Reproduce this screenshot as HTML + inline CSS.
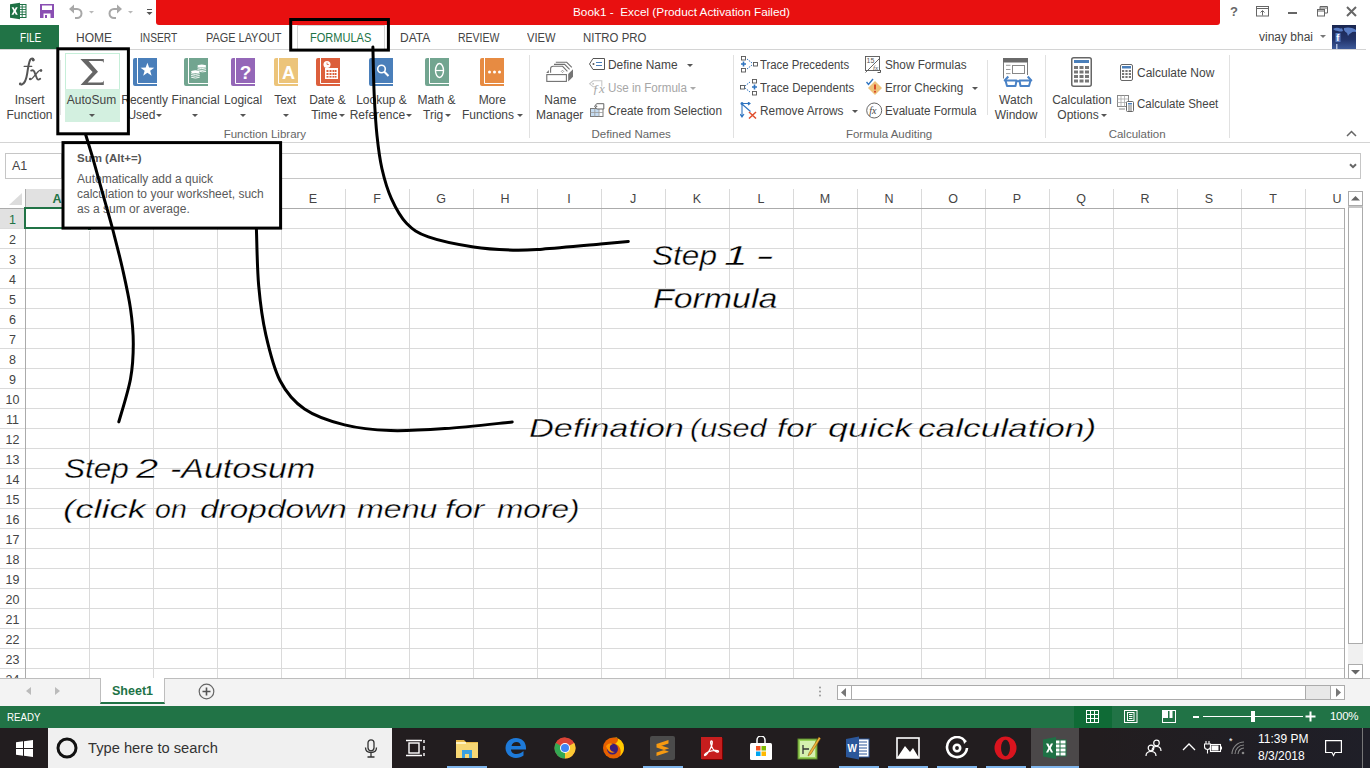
<!DOCTYPE html>
<html><head><meta charset="utf-8">
<style>
*{box-sizing:border-box;margin:0;padding:0}
html,body{width:1370px;height:768px;overflow:hidden;background:#fff;font-family:"Liberation Sans",sans-serif;color:#444}
.a{position:absolute}
.t{position:absolute;white-space:pre;line-height:1}
#title{left:0;top:0;width:1370px;height:25px;background:#fff}
#red{left:156px;top:0;width:1064px;height:25px;background:#e81010;border-radius:0 0 3px 3px}
.tab{position:absolute;top:32px;font-size:12px;color:#444;white-space:pre;line-height:13px;transform-origin:0 0}
.rl{position:absolute;font-size:11.6px;color:#444;white-space:pre;line-height:13px}
.gl{position:absolute;font-size:11.3px;color:#666;white-space:pre;line-height:13px;top:128px}
.sep{position:absolute;width:1px;background:#e1e1e1;top:55px;height:84px}
.car{position:absolute;width:0;height:0;border-left:3px solid transparent;border-right:3px solid transparent;border-top:3px solid #555}
.book{position:absolute;top:58px;width:24px;height:28px}
.ch{position:absolute;top:191px;font-size:12.5px;color:#444;line-height:14px;text-align:center;width:64px}
.rh{position:absolute;left:0;width:25px;font-size:12.5px;color:#444;line-height:14px;text-align:center}
.hw{position:absolute;white-space:pre;line-height:1;font-family:"Liberation Sans",sans-serif;font-style:italic;color:#000;font-size:25px;-webkit-text-stroke:0.35px #fff}
.rc{transform:translateX(-50%)}
</style></head><body>
<!-- title bar -->
<div class="a" id="red"></div>
<div class="t" style="left:573px;top:7px;font-size:11.8px;color:#fff">Book1 -  Excel (Product Activation Failed)</div>

<!-- tab row -->
<div class="a" style="left:0;top:25px;width:59px;height:25px;background:#217346"></div>
<div class="tab" style="left:19.5px;color:#fff;transform:scaleX(0.84)">FILE</div>
<div class="tab" style="left:76px">HOME</div>
<div class="tab" style="left:140px;transform:scaleX(0.85)">INSERT</div>
<div class="tab" style="left:206px;transform:scaleX(0.91)">PAGE LAYOUT</div>
<div class="a" style="left:297px;top:25px;width:88px;height:25px;border:1px solid #d4d4d4;border-bottom:none;background:#fff"></div>
<div class="tab" style="left:310px;color:#217346;transform:scaleX(0.92)">FORMULAS</div>
<div class="tab" style="left:400px">DATA</div>
<div class="tab" style="left:458px;transform:scaleX(0.875)">REVIEW</div>
<div class="tab" style="left:527px;transform:scaleX(0.93)">VIEW</div>
<div class="tab" style="left:583px;transform:scaleX(0.95)">NITRO PRO</div>
<div class="a" style="left:0;top:49px;width:1366px;height:1px;background:#d4d4d4"></div>
<div class="t" style="left:1259px;top:31px;font-size:12px;color:#444">vinay bhai</div>

<!-- ribbon -->
<div id="ribbon">
<!-- QAT -->
<svg class="a" style="left:9px;top:2px" width="19" height="18" viewBox="0 0 19 18"><rect x="9.5" y="2.5" width="7.5" height="13" fill="#fff" stroke="#1e7145" stroke-width="1"/><path d="M9.5 5h7.5M9.5 7.5h7.5M9.5 10h7.5M9.5 12.5h7.5M13.2 2.5v13" stroke="#1e7145" stroke-width="0.9"/><path d="M1 2.2 L11 0.8 L11 17.2 L1 15.8 Z" fill="#1e7145"/><path d="M2.6 5.2 L4.6 5.2 L5.7 7.5 L6.8 5.2 L8.7 5.2 L6.8 9 L8.8 12.8 L6.8 12.8 L5.7 10.5 L4.5 12.8 L2.5 12.8 L4.6 9 Z" fill="#fff"/></svg>
<svg class="a" style="left:40px;top:4px" width="14" height="14" viewBox="0 0 14 14"><path d="M0 0H14V14H0Z M2 1.5V6H12V1.5Z M3.5 9.5V14H10.5V9.5Z" fill="#8a4fb3" fill-rule="evenodd"/><rect x="5" y="11" width="2" height="3" fill="#8a4fb3"/></svg>
<svg class="a" style="left:68px;top:3px" width="28" height="16" viewBox="0 0 28 16"><path d="M3 6 H9 A4.5 4.5 0 0 1 9 15 H7" fill="none" stroke="#a8a8a8" stroke-width="2"/><path d="M1 6 L6 1.5 L6 10.5 Z" fill="#a8a8a8"/><path d="M21 8 h5 l-2.5 2.5z" fill="#b8b8b8"/></svg>
<svg class="a" style="left:108px;top:3px" width="28" height="16" viewBox="0 0 28 16"><path d="M12 6 H6 A4.5 4.5 0 0 0 6 15 H8" fill="none" stroke="#a8a8a8" stroke-width="2"/><path d="M14 6 L9 1.5 L9 10.5 Z" fill="#a8a8a8"/><path d="M20 8 h5 l-2.5 2.5z" fill="#b8b8b8"/></svg>
<svg class="a" style="left:146px;top:8px" width="8" height="8" viewBox="0 0 8 8"><rect x="1" y="1" width="5" height="1" fill="#555"/><path d="M0.5 4 h6 l-3 3z" fill="#555"/></svg>
<!-- window controls -->
<div class="t" style="left:1230px;top:5px;font-size:13px;font-weight:bold;color:#666">?</div>
<svg class="a" style="left:1256px;top:6px" width="14" height="11" viewBox="0 0 14 11"><rect x="0.5" y="0.5" width="12" height="9.5" fill="none" stroke="#666"/><path d="M0.5 2.5h12" stroke="#666"/><path d="M6.5 9.5V5M4.5 6.5l2-2 2 2" fill="none" stroke="#666"/></svg>
<div class="a" style="left:1288px;top:12px;width:9px;height:2px;background:#666"></div>
<svg class="a" style="left:1317px;top:6px" width="11" height="11" viewBox="0 0 11 11"><rect x="0.5" y="3.5" width="7" height="6.5" fill="none" stroke="#666"/><path d="M0.5 5h7" stroke="#666"/><path d="M3 3.5V0.5H10.5V7H7.5M3 2h7.5" fill="none" stroke="#666"/></svg>
<svg class="a" style="left:1346px;top:6px" width="11" height="11" viewBox="0 0 11 11"><path d="M1 1L10 10M10 1L1 10" stroke="#666" stroke-width="2"/></svg>
<!-- account -->
<svg class="a" style="left:1320px;top:35px" width="7" height="5" viewBox="0 0 7 5"><path d="M0 0h6l-3 3z" fill="#777"/></svg>
<svg class="a" style="left:1332px;top:25px" width="24" height="24" viewBox="0 0 24 24"><defs><linearGradient id="pg" x1="0" y1="0" x2="0" y2="1"><stop offset="0" stop-color="#1a2650"/><stop offset="0.6" stop-color="#22346a"/><stop offset="1" stop-color="#3d5a9a"/></linearGradient></defs><rect width="24" height="24" fill="url(#pg)"/><g fill="#5f85d0" opacity="0.9"><path d="M1 4 q3-2 6-1 q2 1 3 0 l1 3 q-3 1-5 0 q-3 0-5-2z"/><path d="M12 3 q4-1 8 0 q3 1 4 2 v2 q-3-1-5 1 q-2 1-3 3 l-1-3 q-2-1-3-3z"/></g><rect x="3.5" y="8" width="5" height="9" fill="#5a7cc0"/><text x="4.2" y="16" font-size="9" fill="#fff" font-family="Liberation Sans" font-weight="bold">f</text><rect x="4" y="19" width="1.5" height="5" fill="#cfdcf5" opacity="0.8"/></svg>

<!-- Insert function -->
<svg class="a" style="left:14px;top:54px" width="35" height="36" viewBox="14 54 35 36"><g fill="none" stroke="#555" stroke-linecap="round"><path d="M33.6 59.8 C33.4 58 31.2 57.9 30.2 59.8 C29 62 28 68 27.2 73.5 C26.3 79.5 25.2 83.5 21.8 84.6" stroke-width="2"/><path d="M24.1 66.4 H31.8" stroke-width="1.1"/><path d="M31.2 70.6 Q33.2 69.6 34.2 71.4 L37 78.5 Q37.8 80.6 40.2 78.8" stroke-width="1.9"/><path d="M41.3 70.2 Q39.8 69.8 38 71.8 L32.5 78.2 Q31.3 79.6 30 79.2" stroke-width="1.3"/></g><g fill="#555"><circle cx="33.2" cy="60.1" r="1.4"/><circle cx="20.3" cy="84" r="1.4"/><circle cx="41" cy="70.6" r="1.3"/><circle cx="30.2" cy="79" r="1.3"/></g></svg>
<!-- AutoSum highlight -->
<div class="a" style="left:65px;top:53px;width:55px;height:36px;border:1px solid #c6efd9;border-bottom:none;background:#fff"></div>
<div class="a" style="left:65px;top:89px;width:55px;height:33px;background:#d3f0e0"></div>
<svg class="a" style="left:79px;top:58px" width="27" height="28" viewBox="0 0 27 28"><path d="M1.4 0.9 L24.8 0.9 L24.8 5.1 L23.8 3.3 L21.5 3.0 L9.6 3.0 L19.0 13.8 L8.7 24.5 L21.5 24.5 L23.8 24.2 L24.8 22.5 L24.8 26.9 L1.6 26.9 L13.6 14.0Z" fill="#666"/></svg>
<div class="sep" style="left:60px;top:60px;height:55px"></div>
</div><!--/ribbon-->
<!-- r2 --><div class="t rc" style="left:29.7px;top:94px;font-size:12px;color:#444">Insert</div>
<div class="t rc" style="left:29.5px;top:109px;font-size:12px;color:#444">Function</div>
<div class="t rc" style="left:91.5px;top:94px;font-size:12px;color:#444">AutoSum</div>
<svg class="a" style="left:89px;top:114px" width="6" height="4"><path d="M0 0h6l-3 3z" fill="#555"/></svg>
<div class="t rc" style="left:144.6px;top:94px;font-size:12px;color:#444">Recently</div>
<div class="t rc" style="left:141.4px;top:109px;font-size:12px;color:#444">Used</div>
<svg class="a" style="left:156.4px;top:114px" width="6" height="4"><path d="M0 0h6l-3 3z" fill="#555"/></svg>
<div class="t rc" style="left:195.6px;top:94px;font-size:12px;color:#444">Financial</div>
<svg class="a" style="left:192.2px;top:114px" width="6" height="4"><path d="M0 0h6l-3 3z" fill="#555"/></svg>
<div class="t rc" style="left:243.1px;top:94px;font-size:12px;color:#444">Logical</div>
<svg class="a" style="left:240.3px;top:114px" width="6" height="4"><path d="M0 0h6l-3 3z" fill="#555"/></svg>
<div class="t rc" style="left:285.2px;top:94px;font-size:12px;color:#444">Text</div>
<svg class="a" style="left:282.6px;top:114px" width="6" height="4"><path d="M0 0h6l-3 3z" fill="#555"/></svg>
<div class="t rc" style="left:327.5px;top:94px;font-size:12px;color:#444">Date &amp;</div>
<div class="t rc" style="left:324.3px;top:109px;font-size:12px;color:#444">Time</div>
<svg class="a" style="left:339.4px;top:114px" width="6" height="4"><path d="M0 0h6l-3 3z" fill="#555"/></svg>
<div class="t rc" style="left:381.5px;top:94px;font-size:12px;color:#444">Lookup &amp;</div>
<div class="t rc" style="left:377.4px;top:109px;font-size:12px;color:#444">Reference</div>
<svg class="a" style="left:405.6px;top:114px" width="6" height="4"><path d="M0 0h6l-3 3z" fill="#555"/></svg>
<div class="t rc" style="left:436.6px;top:94px;font-size:12px;color:#444">Math &amp;</div>
<div class="t rc" style="left:433.2px;top:109px;font-size:12px;color:#444">Trig</div>
<svg class="a" style="left:445.4px;top:114px" width="6" height="4"><path d="M0 0h6l-3 3z" fill="#555"/></svg>
<div class="t rc" style="left:492.3px;top:94px;font-size:12px;color:#444">More</div>
<div class="t rc" style="left:488px;top:109px;font-size:12px;color:#444">Functions</div>
<svg class="a" style="left:516.6px;top:114px" width="6" height="4"><path d="M0 0h6l-3 3z" fill="#555"/></svg>
<div class="t rc" style="left:264.9px;top:129px;font-size:11.5px;color:#666">Function Library</div>
<svg class="a" style="left:133px;top:58px" width="24" height="28" viewBox="0 0 24 28"><path d="M0 2 Q0 0 2 0 H4 V25 Q4 26 5 26 H24 V28 H2 Q0 28 0 26 Z" fill="#4a7fba"/><rect x="5" y="0" width="19" height="25" fill="#4a7fba"/><path d="M14.40 4.70 L16.10 9.55 L21.25 9.68 L17.16 12.80 L18.63 17.72 L14.40 14.80 L10.17 17.72 L11.64 12.80 L7.55 9.68 L12.70 9.55Z" fill="#fff"/></svg>
<svg class="a" style="left:184px;top:58px" width="24" height="28" viewBox="0 0 24 28"><path d="M0 2 Q0 0 2 0 H4 V25 Q4 26 5 26 H24 V28 H2 Q0 28 0 26 Z" fill="#72a590"/><rect x="5" y="0" width="19" height="25" fill="#72a590"/><g fill="#fff"><ellipse cx="17.8" cy="8" rx="4.3" ry="1.5"/><ellipse cx="11.4" cy="13.8" rx="4.3" ry="1.5"/></g><g fill="none" stroke="#fff" stroke-width="0.9"><path d="M13.5 9.8 Q17.8 11.6 22.1 9.8 M13.5 11.6 Q17.8 13.4 22.1 11.6 M15.8 13.4 Q17.8 14.3 22.1 13.4"/><path d="M7.1 15.6 Q11.4 17.4 15.7 15.6 M7.1 17.4 Q11.4 19.2 15.7 17.4 M7.1 19.2 Q11.4 21 15.7 19.2"/></g></svg>
<svg class="a" style="left:231px;top:58px" width="24" height="28" viewBox="0 0 24 28"><path d="M0 2 Q0 0 2 0 H4 V25 Q4 26 5 26 H24 V28 H2 Q0 28 0 26 Z" fill="#9467b8"/><rect x="5" y="0" width="19" height="25" fill="#9467b8"/><text x="14.5" y="21" font-family="Liberation Sans" font-weight="bold" font-size="19" fill="#fff" text-anchor="middle">?</text></svg>
<svg class="a" style="left:274px;top:58px" width="24" height="28" viewBox="0 0 24 28"><path d="M0 2 Q0 0 2 0 H4 V25 Q4 26 5 26 H24 V28 H2 Q0 28 0 26 Z" fill="#ecc47a"/><rect x="5" y="0" width="19" height="25" fill="#ecc47a"/><text x="14.5" y="21" font-family="Liberation Sans" font-weight="bold" font-size="18" fill="#fff" text-anchor="middle">A</text></svg>
<svg class="a" style="left:316px;top:58px" width="24" height="28" viewBox="0 0 24 28"><path d="M0 2 Q0 0 2 0 H4 V25 Q4 26 5 26 H24 V28 H2 Q0 28 0 26 Z" fill="#dc5f3c"/><rect x="5" y="0" width="19" height="25" fill="#dc5f3c"/><circle cx="11" cy="6.5" r="3.5" fill="#fff"/><path d="M11 4.5v2h1.8" stroke="#dc5f3c" stroke-width="0.8" fill="none"/><rect x="9" y="10" width="13" height="11" fill="#fff"/><g fill="#dc5f3c"><rect x="10.5" y="12" width="2" height="2"/><rect x="13.5" y="12" width="2" height="2"/><rect x="16.5" y="12" width="2" height="2"/><rect x="19" y="12" width="1.5" height="2"/><rect x="10.5" y="15" width="2" height="2"/><rect x="13.5" y="15" width="2" height="2"/><rect x="16.5" y="15" width="2" height="2"/><rect x="19" y="15" width="1.5" height="2"/><rect x="10.5" y="18" width="2" height="1.6"/><rect x="13.5" y="18" width="2" height="1.6"/><rect x="16.5" y="18" width="2" height="1.6"/><rect x="19" y="18" width="1.5" height="1.6"/></g></svg>
<svg class="a" style="left:369px;top:58px" width="24" height="28" viewBox="0 0 24 28"><path d="M0 2 Q0 0 2 0 H4 V25 Q4 26 5 26 H24 V28 H2 Q0 28 0 26 Z" fill="#4a7fba"/><rect x="5" y="0" width="19" height="25" fill="#4a7fba"/><circle cx="12.5" cy="11" r="3.8" fill="none" stroke="#fff" stroke-width="1.6"/><path d="M15.3 13.8 L19.5 18" stroke="#fff" stroke-width="2"/></svg>
<svg class="a" style="left:425px;top:58px" width="24" height="28" viewBox="0 0 24 28"><path d="M0 2 Q0 0 2 0 H4 V25 Q4 26 5 26 H24 V28 H2 Q0 28 0 26 Z" fill="#72a590"/><rect x="5" y="0" width="19" height="25" fill="#72a590"/><ellipse cx="14.5" cy="12.5" rx="4" ry="7" fill="none" stroke="#fff" stroke-width="1.4"/><path d="M10.5 12.5h8" stroke="#fff" stroke-width="1.2"/></svg>
<svg class="a" style="left:480px;top:58px" width="24" height="28" viewBox="0 0 24 28"><path d="M0 2 Q0 0 2 0 H4 V25 Q4 26 5 26 H24 V28 H2 Q0 28 0 26 Z" fill="#e78b42"/><rect x="5" y="0" width="19" height="25" fill="#e78b42"/><circle cx="9.5" cy="14" r="1.5" fill="#fff"/><circle cx="14.5" cy="14" r="1.5" fill="#fff"/><circle cx="19.5" cy="14" r="1.5" fill="#fff"/></svg>
<div class="sep" style="left:529px;top:55px;height:83px"></div>
<svg class="a" style="left:540px;top:56px" width="40" height="32" viewBox="540 56 40 32"><g fill="none" stroke="#707070" stroke-width="1.1"><rect x="546.8" y="74.6" width="19.6" height="6.8"/><path d="M550.6 72.8 V68.8 Q550.6 66.3 553.2 66.3 H562.6 L567.4 71.3"/><path d="M554 64.4 H564.6 L569.6 69.4"/><path d="M555.8 62.3 H566.7 L571.8 67.4"/></g><path d="M568.2 74 L573 69.3 V76.8 L568.2 81.4Z" fill="#757575"/><path d="M546.2 72.9 L548.8 70 V72.9Z" fill="#707070"/><path d="M562.5 70.2 L563.7 71.4 L562.5 72.6 L561.3 71.4Z" fill="none" stroke="#888" stroke-width="0.8"/></svg>
<div class="t rc" style="left:560.3px;top:94px;font-size:12px;color:#444">Name</div>
<div class="t rc" style="left:559.7px;top:109px;font-size:12px;color:#444">Manager</div>
<svg class="a" style="left:589px;top:58px" width="16" height="12" viewBox="0 0 16 12"><path d="M4 0.5 H15.5 V11.5 H4 L0.5 6 Z" fill="none" stroke="#555"/><circle cx="4.5" cy="6" r="1" fill="#555"/><path d="M7 4.5h6M7 7.5h6" stroke="#4a7fba" stroke-width="1.2"/></svg>
<div class="t" style="left:607.5px;top:59px;font-size:12px;color:#444;transform:scaleX(0.993);transform-origin:0 0">Define Name</div>
<svg class="a" style="left:686.5px;top:64px" width="6" height="4"><path d="M0 0h6l-3 3z" fill="#555"/></svg>
<svg class="a" style="left:586px;top:78px" width="22" height="18" viewBox="586 78 22 18"><path d="M601.8 86.5 V80.8 H593.2 L589.6 83.8 L593.2 86.8 H596" fill="none" stroke="#c8c8c8" stroke-width="1.1"/><circle cx="593.1" cy="83.8" r="0.9" fill="#bbb"/><text x="592.5" y="92.5" font-family="Liberation Serif" font-style="italic" font-size="13" fill="#a8a8a8">&#x192;x</text></svg>
<div class="t" style="left:607.5px;top:82px;font-size:12px;color:#a6a6a6;transform:scaleX(0.970);transform-origin:0 0">Use in Formula</div>
<svg class="a" style="left:689.9px;top:87px" width="6" height="4"><path d="M0 0h6l-3 3z" fill="#aaa"/></svg>
<svg class="a" style="left:586px;top:100px" width="22" height="20" viewBox="586 100 22 20"><rect x="590.5" y="108.5" width="12.5" height="8" fill="#fff" stroke="#7a7a7a" stroke-width="1"/><rect x="591" y="109" width="8.3" height="7" fill="#c5dcf2"/><path d="M594.8 108.5 V116.5 M599 108.5 V116.5 M590.5 112.5 H603" stroke="#9a9a9a" stroke-width="0.8"/><path d="M596.6 103.7 H603.8 V109 H596.6 L594.6 106.4Z" fill="#fff" stroke="#666" stroke-width="1"/><path d="M596.4 105.4 v2 M595.4 106.4 h2" stroke="#666" stroke-width="0.7"/></svg>
<div class="t" style="left:607.5px;top:105px;font-size:12px;color:#444;transform:scaleX(0.982);transform-origin:0 0">Create from Selection</div>
<div class="t rc" style="left:631.2px;top:129px;font-size:11.5px;color:#666">Defined Names</div>
<div class="sep" style="left:733px;top:55px;height:83px"></div>
<svg class="a" style="left:740px;top:56px" width="18" height="17" viewBox="0 0 18 17"><g fill="none" stroke="#555" stroke-width="0.9"><rect x="1.5" y="0.5" width="4" height="3.5"/><rect x="1.5" y="12.5" width="4" height="3.5"/><rect x="13.5" y="6.5" width="4" height="3.5"/></g><path d="M3.5 5.5v5M1 8h5" stroke="#2f74c0" stroke-width="1.6"/><path d="M7 3 l5 4 M7 13 l5-4" stroke="#2f74c0" stroke-width="1" stroke-dasharray="1.5 1"/></svg>
<div class="t" style="left:759.5px;top:59px;font-size:12px;color:#444;transform:scaleX(0.945);transform-origin:0 0">Trace Precedents</div>
<svg class="a" style="left:740px;top:79px" width="18" height="17" viewBox="0 0 18 17"><g fill="none" stroke="#555" stroke-width="0.9"><rect x="0.5" y="6.5" width="4" height="3.5"/><rect x="12.5" y="0.5" width="4" height="3.5"/><rect x="12.5" y="12.5" width="4" height="3.5"/></g><path d="M14.5 5.5v5M12 8h5" stroke="#2f74c0" stroke-width="1.6"/><path d="M5 7 l5-4 M5 9 l5 4" stroke="#2f74c0" stroke-width="1" stroke-dasharray="1.5 1"/></svg>
<div class="t" style="left:759.5px;top:82px;font-size:12px;color:#444;transform:scaleX(0.959);transform-origin:0 0">Trace Dependents</div>
<svg class="a" style="left:740px;top:102px" width="18" height="17" viewBox="0 0 18 17"><circle cx="2" cy="1.5" r="1.5" fill="#2f74c0"/><path d="M2 2v12M0 12l2 3 2-3M2 1.5h8M8 0l2 1.5-2 1.5M2.5 2.5l8 7" stroke="#2f74c0" stroke-width="1.1" fill="none"/><path d="M9 10l7 6.5M16 10l-7 6.5" stroke="#e0502f" stroke-width="1.5"/></svg>
<div class="t" style="left:759.5px;top:105px;font-size:12px;color:#444;transform:scaleX(0.986);transform-origin:0 0">Remove Arrows</div>
<svg class="a" style="left:852.2px;top:110px" width="6" height="4"><path d="M0 0h6l-3 3z" fill="#555"/></svg>
<svg class="a" style="left:865px;top:56px" width="17" height="17" viewBox="0 0 17 17"><rect x="0.5" y="0.5" width="14" height="14" fill="none" stroke="#555" stroke-width="0.9"/><path d="M0.5 16.5 L15 2" stroke="#555" stroke-width="0.9"/><text x="1.5" y="7" font-size="7" fill="#555" font-family="Liberation Sans">15</text><text x="8" y="14" font-size="7" font-style="italic" fill="#555" font-family="Liberation Serif">fx</text><path d="M15.5 14v2.5h-3" stroke="#555" fill="none"/></svg>
<div class="t" style="left:884.5px;top:59px;font-size:12px;color:#444;transform:scaleX(0.979);transform-origin:0 0">Show Formulas</div>
<svg class="a" style="left:866px;top:78px" width="17" height="17" viewBox="0 0 17 17"><path d="M9 3 L16 10 L9 17 L2 10 Z" fill="#eec27a"/><path d="M9 6.5v5" stroke="#d43f1f" stroke-width="1.8"/><circle cx="9" cy="13.8" r="1" fill="#d43f1f"/><path d="M0.5 4 l2 2.5 l4.5-5.5" stroke="#2f74c0" stroke-width="1.4" fill="none"/></svg>
<div class="t" style="left:884.5px;top:82px;font-size:12px;color:#444;transform:scaleX(0.977);transform-origin:0 0">Error Checking</div>
<svg class="a" style="left:972.4px;top:87px" width="6" height="4"><path d="M0 0h6l-3 3z" fill="#555"/></svg>
<svg class="a" style="left:866px;top:102px" width="17" height="17" viewBox="0 0 17 17"><circle cx="8.2" cy="8.5" r="7.5" fill="none" stroke="#555" stroke-width="0.9"/><text x="3.2" y="12" font-size="10" font-style="italic" fill="#444" font-family="Liberation Serif">fx</text></svg>
<div class="t" style="left:884.5px;top:105px;font-size:12px;color:#444;transform:scaleX(0.973);transform-origin:0 0">Evaluate Formula</div>
<div class="t rc" style="left:889.1px;top:129px;font-size:11.5px;color:#666">Formula Auditing</div>
<div class="sep" style="left:987px;top:60px;height:55px"></div>
<svg class="a" style="left:1000px;top:56px" width="35" height="33" viewBox="1000 56 35 33"><rect x="1003" y="58" width="25" height="4.5" fill="#6a6a6a"/><path d="M1003.5 62 V78.5 M1027.5 62 V75" stroke="#7a7a7a" stroke-width="1"/><path d="M1006 65.3h4.5M1006 69.5h4.5M1006 73.6h4.5" stroke="#9a9a9a" stroke-width="1"/><rect x="1012.5" y="65.5" width="12" height="8" fill="none" stroke="#888" stroke-width="1"/><g fill="none" stroke="#4a82c6" stroke-width="2" stroke-linejoin="round"><path d="M1005.5 80.5 H1016.5 L1015.5 86 H1007 Z"/><path d="M1019.5 80.5 H1030.5 L1029 86 H1020.5 Z"/><path d="M1016.5 81.2 H1019.5"/><path d="M1008.3 76.5 L1004.2 81 M1027.7 76.5 L1031.8 81"/></g></svg>
<div class="t rc" style="left:1015.9px;top:94px;font-size:12px;color:#444">Watch</div>
<div class="t rc" style="left:1016px;top:109px;font-size:12px;color:#444">Window</div>
<div class="sep" style="left:1045px;top:55px;height:83px"></div>
<svg class="a" style="left:1071px;top:57px" width="21" height="30" viewBox="0 0 21 30"><rect x="0.75" y="0.75" width="19.5" height="28.5" rx="2" fill="#fff" stroke="#666" stroke-width="1.5"/><rect x="3" y="3" width="15" height="3" fill="#4a7fba"/><g fill="#777"><rect x="3" y="9" width="4" height="3"/><rect x="8.5" y="9" width="4" height="3"/><rect x="14" y="9" width="4" height="3"/><rect x="3" y="13.5" width="4" height="3"/><rect x="8.5" y="13.5" width="4" height="3"/><rect x="14" y="13.5" width="4" height="3"/><rect x="3" y="18" width="4" height="3"/><rect x="8.5" y="18" width="4" height="3"/><rect x="14" y="18" width="4" height="3"/><rect x="3" y="22.5" width="4" height="3"/><rect x="8.5" y="22.5" width="4" height="3"/><rect x="14" y="22.5" width="4" height="3"/></g></svg>
<div class="t rc" style="left:1081.9px;top:94px;font-size:12px;color:#444">Calculation</div>
<div class="t rc" style="left:1078px;top:109px;font-size:12px;color:#444">Options</div>
<svg class="a" style="left:1101.3px;top:114px" width="6" height="4"><path d="M0 0h6l-3 3z" fill="#555"/></svg>
<svg class="a" style="left:1120px;top:64px" width="13" height="17" viewBox="0 0 13 17"><rect x="0.5" y="0.5" width="12" height="16" rx="1.5" fill="#fff" stroke="#666"/><rect x="2" y="2" width="9" height="2.5" fill="#4a7fba"/><g fill="#777"><rect x="2" y="6" width="2.2" height="2"/><rect x="5.4" y="6" width="2.2" height="2"/><rect x="8.8" y="6" width="2.2" height="2"/><rect x="2" y="9" width="2.2" height="2"/><rect x="5.4" y="9" width="2.2" height="2"/><rect x="8.8" y="9" width="2.2" height="2"/><rect x="2" y="12" width="2.2" height="2"/><rect x="5.4" y="12" width="2.2" height="2"/><rect x="8.8" y="12" width="2.2" height="2"/></g></svg>
<div class="t" style="left:1136.5px;top:67px;font-size:12px;color:#444;transform:scaleX(0.999);transform-origin:0 0">Calculate Now</div>
<svg class="a" style="left:1117px;top:95px" width="17" height="17" viewBox="0 0 17 17"><rect x="0.5" y="0.5" width="11" height="11" fill="#fff" stroke="#888"/><path d="M0.5 4h11M0.5 7.5h11M4 0.5v11M7.5 0.5v11" stroke="#aaa" stroke-width="0.8"/><path d="M2 14 h6" stroke="#888"/><rect x="9.5" y="6.5" width="7" height="10" rx="1" fill="#fff" stroke="#666"/><rect x="11" y="8" width="4" height="1.5" fill="#4a7fba"/><path d="M11 11h4M11 13h4M11 15h4" stroke="#777" stroke-width="1"/></svg>
<div class="t" style="left:1136.5px;top:98px;font-size:12px;color:#444;transform:scaleX(0.959);transform-origin:0 0">Calculate Sheet</div>
<div class="t rc" style="left:1137.1px;top:129px;font-size:11.5px;color:#666">Calculation</div>
<div class="sep" style="left:1229px;top:55px;height:83px"></div>
<svg class="a" style="left:1346px;top:130px" width="11" height="7" viewBox="0 0 11 7"><path d="M1 6 L5.5 1.5 L10 6" stroke="#666" stroke-width="1.5" fill="none"/></svg><!--/r2-->
<!-- ribbon bottom -->
<div class="a" style="left:0;top:142px;width:1370px;height:1px;background:#d4d4d4"></div>

<!-- formula bar -->
<div class="a" style="left:5px;top:153px;width:57px;height:26px;border:1px solid #c6c6c6;background:#fff"></div>
<div class="t" style="left:12px;top:160px;font-size:12.5px;color:#444">A1</div>
<div class="a" style="left:5px;top:153px;width:1356px;height:26px;border:1px solid #c6c6c6"></div>

<!-- grid -->
<div class="a" id="grid" style="left:0;top:188px;width:1345px;height:490px;overflow:hidden"><div class="a" style="left:25px;top:1px;width:64px;height:20px;background:#e1e1e1"></div>
<div class="a" style="left:0;top:20px;width:25px;height:20px;background:#e1e1e1"></div>
<div class="ch" style="left:25px;top:4px;color:#217346;font-weight:bold">A</div>
<div class="ch" style="left:89px;top:4px;color:#444;font-weight:normal">B</div>
<div class="ch" style="left:153px;top:4px;color:#444;font-weight:normal">C</div>
<div class="ch" style="left:217px;top:4px;color:#444;font-weight:normal">D</div>
<div class="ch" style="left:281px;top:4px;color:#444;font-weight:normal">E</div>
<div class="ch" style="left:345px;top:4px;color:#444;font-weight:normal">F</div>
<div class="ch" style="left:409px;top:4px;color:#444;font-weight:normal">G</div>
<div class="ch" style="left:473px;top:4px;color:#444;font-weight:normal">H</div>
<div class="ch" style="left:537px;top:4px;color:#444;font-weight:normal">I</div>
<div class="ch" style="left:601px;top:4px;color:#444;font-weight:normal">J</div>
<div class="ch" style="left:665px;top:4px;color:#444;font-weight:normal">K</div>
<div class="ch" style="left:729px;top:4px;color:#444;font-weight:normal">L</div>
<div class="ch" style="left:793px;top:4px;color:#444;font-weight:normal">M</div>
<div class="ch" style="left:857px;top:4px;color:#444;font-weight:normal">N</div>
<div class="ch" style="left:921px;top:4px;color:#444;font-weight:normal">O</div>
<div class="ch" style="left:985px;top:4px;color:#444;font-weight:normal">P</div>
<div class="ch" style="left:1049px;top:4px;color:#444;font-weight:normal">Q</div>
<div class="ch" style="left:1113px;top:4px;color:#444;font-weight:normal">R</div>
<div class="ch" style="left:1177px;top:4px;color:#444;font-weight:normal">S</div>
<div class="ch" style="left:1241px;top:4px;color:#444;font-weight:normal">T</div>
<div class="ch" style="left:1305px;top:4px;color:#444;font-weight:normal">U</div>
<div class="a" style="left:89px;top:1px;width:1px;height:490px;background:#dadada"></div>
<div class="a" style="left:153px;top:1px;width:1px;height:490px;background:#dadada"></div>
<div class="a" style="left:217px;top:1px;width:1px;height:490px;background:#dadada"></div>
<div class="a" style="left:281px;top:1px;width:1px;height:490px;background:#dadada"></div>
<div class="a" style="left:345px;top:1px;width:1px;height:490px;background:#dadada"></div>
<div class="a" style="left:409px;top:1px;width:1px;height:490px;background:#dadada"></div>
<div class="a" style="left:473px;top:1px;width:1px;height:490px;background:#dadada"></div>
<div class="a" style="left:537px;top:1px;width:1px;height:490px;background:#dadada"></div>
<div class="a" style="left:601px;top:1px;width:1px;height:490px;background:#dadada"></div>
<div class="a" style="left:665px;top:1px;width:1px;height:490px;background:#dadada"></div>
<div class="a" style="left:729px;top:1px;width:1px;height:490px;background:#dadada"></div>
<div class="a" style="left:793px;top:1px;width:1px;height:490px;background:#dadada"></div>
<div class="a" style="left:857px;top:1px;width:1px;height:490px;background:#dadada"></div>
<div class="a" style="left:921px;top:1px;width:1px;height:490px;background:#dadada"></div>
<div class="a" style="left:985px;top:1px;width:1px;height:490px;background:#dadada"></div>
<div class="a" style="left:1049px;top:1px;width:1px;height:490px;background:#dadada"></div>
<div class="a" style="left:1113px;top:1px;width:1px;height:490px;background:#dadada"></div>
<div class="a" style="left:1177px;top:1px;width:1px;height:490px;background:#dadada"></div>
<div class="a" style="left:1241px;top:1px;width:1px;height:490px;background:#dadada"></div>
<div class="a" style="left:1305px;top:1px;width:1px;height:490px;background:#dadada"></div>
<div class="a" style="left:0;top:40px;width:1345px;height:1px;background:#dadada"></div>
<div class="a" style="left:0;top:60px;width:1345px;height:1px;background:#dadada"></div>
<div class="a" style="left:0;top:80px;width:1345px;height:1px;background:#dadada"></div>
<div class="a" style="left:0;top:100px;width:1345px;height:1px;background:#dadada"></div>
<div class="a" style="left:0;top:120px;width:1345px;height:1px;background:#dadada"></div>
<div class="a" style="left:0;top:140px;width:1345px;height:1px;background:#dadada"></div>
<div class="a" style="left:0;top:160px;width:1345px;height:1px;background:#dadada"></div>
<div class="a" style="left:0;top:180px;width:1345px;height:1px;background:#dadada"></div>
<div class="a" style="left:0;top:200px;width:1345px;height:1px;background:#dadada"></div>
<div class="a" style="left:0;top:220px;width:1345px;height:1px;background:#dadada"></div>
<div class="a" style="left:0;top:240px;width:1345px;height:1px;background:#dadada"></div>
<div class="a" style="left:0;top:260px;width:1345px;height:1px;background:#dadada"></div>
<div class="a" style="left:0;top:280px;width:1345px;height:1px;background:#dadada"></div>
<div class="a" style="left:0;top:300px;width:1345px;height:1px;background:#dadada"></div>
<div class="a" style="left:0;top:320px;width:1345px;height:1px;background:#dadada"></div>
<div class="a" style="left:0;top:340px;width:1345px;height:1px;background:#dadada"></div>
<div class="a" style="left:0;top:360px;width:1345px;height:1px;background:#dadada"></div>
<div class="a" style="left:0;top:380px;width:1345px;height:1px;background:#dadada"></div>
<div class="a" style="left:0;top:400px;width:1345px;height:1px;background:#dadada"></div>
<div class="a" style="left:0;top:420px;width:1345px;height:1px;background:#dadada"></div>
<div class="a" style="left:0;top:440px;width:1345px;height:1px;background:#dadada"></div>
<div class="a" style="left:0;top:460px;width:1345px;height:1px;background:#dadada"></div>
<div class="a" style="left:0;top:480px;width:1345px;height:1px;background:#dadada"></div>
<div class="a" style="left:0;top:500px;width:1345px;height:1px;background:#dadada"></div>
<div class="a" style="left:0;top:520px;width:1345px;height:1px;background:#dadada"></div>
<div class="rh" style="top:25px;color:#217346;font-weight:normal">1</div>
<div class="rh" style="top:45px;color:#444;font-weight:normal">2</div>
<div class="rh" style="top:65px;color:#444;font-weight:normal">3</div>
<div class="rh" style="top:85px;color:#444;font-weight:normal">4</div>
<div class="rh" style="top:105px;color:#444;font-weight:normal">5</div>
<div class="rh" style="top:125px;color:#444;font-weight:normal">6</div>
<div class="rh" style="top:145px;color:#444;font-weight:normal">7</div>
<div class="rh" style="top:165px;color:#444;font-weight:normal">8</div>
<div class="rh" style="top:185px;color:#444;font-weight:normal">9</div>
<div class="rh" style="top:205px;color:#444;font-weight:normal">10</div>
<div class="rh" style="top:225px;color:#444;font-weight:normal">11</div>
<div class="rh" style="top:245px;color:#444;font-weight:normal">12</div>
<div class="rh" style="top:265px;color:#444;font-weight:normal">13</div>
<div class="rh" style="top:285px;color:#444;font-weight:normal">14</div>
<div class="rh" style="top:305px;color:#444;font-weight:normal">15</div>
<div class="rh" style="top:325px;color:#444;font-weight:normal">16</div>
<div class="rh" style="top:345px;color:#444;font-weight:normal">17</div>
<div class="rh" style="top:365px;color:#444;font-weight:normal">18</div>
<div class="rh" style="top:385px;color:#444;font-weight:normal">19</div>
<div class="rh" style="top:405px;color:#444;font-weight:normal">20</div>
<div class="rh" style="top:425px;color:#444;font-weight:normal">21</div>
<div class="rh" style="top:445px;color:#444;font-weight:normal">22</div>
<div class="rh" style="top:465px;color:#444;font-weight:normal">23</div>
<div class="rh" style="top:485px;color:#444;font-weight:normal">24</div>
<div class="a" style="left:0;top:20px;width:1345px;height:1px;background:#ababab"></div>
<div class="a" style="left:25px;top:1px;width:1px;height:489px;background:#ababab"></div>
<div class="a" style="left:1344px;top:20px;width:1px;height:470px;background:#ababab"></div>
<div class="a" style="left:25px;top:19px;width:64px;height:2px;background:#217346"></div>
<div class="a" style="left:24px;top:20px;width:2px;height:20px;background:#217346"></div>
<svg class="a" style="left:8px;top:4px" width="15" height="14"><path d="M14 1 L14 13 L1 13 Z" fill="#dcdcdc"/></svg>
<div class="a" style="left:24px;top:19px;width:67px;height:22px;border:2px solid #217346"></div>
<div class="a" style="left:87px;top:38px;width:5px;height:5px;background:#217346;border:1px solid #fff"></div></div><!--/grid-->

<!-- sheet tabs -->
<div class="a" style="left:0;top:678px;width:1370px;height:28px;background:#f3f3f3;border-top:1px solid #bdbdbd"></div>
<div class="a" style="left:100px;top:678px;width:65px;height:26px;background:#fff;border-left:1px solid #bdbdbd;border-right:1px solid #bdbdbd;border-bottom:2px solid #217346"></div>
<div class="t" style="left:112px;top:685px;font-size:12.5px;font-weight:bold;color:#217346">Sheet1</div>

<!-- status bar -->
<div class="a" style="left:0;top:706px;width:1370px;height:22px;background:#217346"></div>
<div class="t" style="left:7px;top:712px;font-size:11px;color:#fff;transform:scaleX(0.88);transform-origin:0 0">READY</div>

<!-- bot --><div class="a" style="left:1345px;top:188px;width:25px;height:490px;background:#fff"></div>
<div class="a" style="left:1348px;top:191px;width:15px;height:488px;background:#f0f0f0"></div>
<div class="a" style="left:1348px;top:191px;width:15px;height:15px;border:1px solid #ababab;background:#fff"></div>
<svg class="a" style="left:1351px;top:196px" width="9" height="5"><path d="M0 4.5 L4.5 0 L9 4.5Z" fill="#666"/></svg>
<div class="a" style="left:1348px;top:206px;width:15px;height:438px;border:1px solid #ababab;border-top:2px solid #c6c6c6;background:#fff"></div>
<div class="a" style="left:1348px;top:664px;width:15px;height:15px;border:1px solid #ababab;background:#fff"></div>
<svg class="a" style="left:1351px;top:670px" width="9" height="5"><path d="M0 0 L4.5 4.5 L9 0Z" fill="#666"/></svg>
<svg class="a" style="left:1349px;top:163px" width="8" height="6"><path d="M1 1.2 L4 4.2 L7 1.2" stroke="#666" stroke-width="2" fill="none"/></svg>
<svg class="a" style="left:26px;top:687px" width="6" height="8"><path d="M5 0 L0 4 L5 8Z" fill="#bbb"/></svg>
<svg class="a" style="left:55px;top:687px" width="6" height="8"><path d="M0 0 L5 4 L0 8Z" fill="#bbb"/></svg>
<svg class="a" style="left:198px;top:683px" width="17" height="17"><circle cx="8.5" cy="8.5" r="7.3" fill="none" stroke="#666" stroke-width="1.2"/><path d="M8.5 4.5v8M4.5 8.5h8" stroke="#555" stroke-width="1.6"/></svg>
<svg class="a" style="left:818px;top:686px" width="4" height="12"><circle cx="2" cy="1.5" r="1" fill="#999"/><circle cx="2" cy="5.5" r="1" fill="#999"/><circle cx="2" cy="9.5" r="1" fill="#999"/></svg>
<div class="a" style="left:837px;top:685px;width:508px;height:15px;border:1px solid #ababab;background:#e8e8e8"></div>
<div class="a" style="left:851px;top:685px;width:455px;height:15px;border:1px solid #ababab;background:#fff"></div>
<div class="a" style="left:837px;top:685px;width:15px;height:15px;border:1px solid #ababab;background:#fff"></div>
<svg class="a" style="left:841px;top:688px" width="6" height="9"><path d="M5 0 L0 4.5 L5 9Z" fill="#777"/></svg>
<div class="a" style="left:1330px;top:685px;width:15px;height:15px;border:1px solid #ababab;background:#fff"></div>
<svg class="a" style="left:1336px;top:688px" width="6" height="9"><path d="M0 0 L5 4.5 L0 9Z" fill="#777"/></svg>
<div class="a" style="left:1074px;top:706px;width:38px;height:22px;background:#0f6b36"></div>
<svg class="a" style="left:1085px;top:709px" width="15" height="15" viewBox="0 0 15 15"><g stroke="#fff" stroke-width="1" fill="none"><rect x="1.5" y="1.5" width="12" height="12"/><path d="M5.5 1.5v12M9.5 1.5v12M1.5 5.5h12M1.5 9.5h12"/></g></svg>
<svg class="a" style="left:1123px;top:709px" width="16" height="15" viewBox="0 0 16 15"><g stroke="#fff" stroke-width="1" fill="none"><rect x="1.5" y="1.5" width="12.5" height="12"/><rect x="4.5" y="3.5" width="6.5" height="8"/><path d="M6 5.5h3.5M6 7.5h3.5M6 9.5h3.5"/></g></svg>
<svg class="a" style="left:1161px;top:709px" width="16" height="15" viewBox="0 0 16 15"><g stroke="#fff" stroke-width="1" fill="none"><rect x="1.5" y="1.5" width="13" height="12"/></g><rect x="2" y="2" width="5" height="7" fill="#fff"/><rect x="8.5" y="2" width="3" height="7" fill="#fff"/></svg>
<div class="a" style="left:1193px;top:716px;width:6px;height:2px;background:#fff"></div>
<div class="a" style="left:1203px;top:716px;width:100px;height:1px;background:#fff"></div>
<div class="a" style="left:1251px;top:711px;width:4px;height:11px;background:#fff"></div>
<svg class="a" style="left:1305px;top:711px" width="11" height="11"><path d="M5.5 0.5v10M0.5 5.5h10" stroke="#fff" stroke-width="2"/></svg>
<div class="t" style="left:1330px;top:711px;font-size:11.5px;color:#fff;letter-spacing:-0.3px">100%</div><!--/bot-->
<!-- taskbar -->
<div class="a" style="left:0;top:728px;width:1370px;height:40px;background:linear-gradient(90deg,#221d1f 0%,#221d1f 80%,#1f1f28 100%)"></div>
<div class="a" style="left:48px;top:728px;width:344px;height:40px;background:#f0f0f0"></div>
<div class="t" style="left:88px;top:741px;font-size:14.7px;color:#333">Type here to search</div>

<!-- tb --><svg class="a" style="left:16px;top:740px" width="17" height="17" viewBox="0 0 17 17"><path d="M0 2.3 L7 1.3 V8 H0Z M8 1.2 L17 0 V8 H8Z M0 9 H7 V15.7 L0 14.7Z M8 9 H17 V17 L8 15.8Z" fill="#fff"/></svg>
<svg class="a" style="left:56px;top:737px" width="22" height="22"><circle cx="11" cy="11" r="9" fill="none" stroke="#111" stroke-width="3"/></svg>
<svg class="a" style="left:364px;top:739px" width="14" height="19" viewBox="0 0 14 19"><rect x="4" y="0.8" width="6" height="11" rx="3" fill="none" stroke="#333" stroke-width="1.3"/><path d="M1.5 8.5 q0 5 5.5 5 q5.5 0 5.5-5 M7 13.5v4 M3.5 18h7" fill="none" stroke="#333" stroke-width="1.3"/></svg>
<svg class="a" style="left:406px;top:739px" width="20" height="18" viewBox="0 0 20 18"><g fill="none" stroke="#fff" stroke-width="1.4"><rect x="3" y="4" width="10" height="10"/><path d="M0 1.5h16M0 16.5h16M18 1v3M18 7v4M18 14v3"/></g></svg>
<div class="a" style="left:447px;top:766px;width:40px;height:2px;background:#7fb5ec"></div>
<div class="a" style="left:643px;top:766px;width:40px;height:2px;background:#7fb5ec"></div>
<div class="a" style="left:839px;top:766px;width:40px;height:2px;background:#7fb5ec"></div>
<div class="a" style="left:888px;top:766px;width:40px;height:2px;background:#7fb5ec"></div>
<div class="a" style="left:937px;top:766px;width:40px;height:2px;background:#7fb5ec"></div>
<div class="a" style="left:986px;top:766px;width:40px;height:2px;background:#7fb5ec"></div>
<div class="a" style="left:1035px;top:766px;width:40px;height:2px;background:#7fb5ec"></div>
<div class="a" style="left:1031px;top:728px;width:48px;height:38px;background:#4b4849"></div>
<div class="a" style="left:1031px;top:766px;width:48px;height:2px;background:#7fb5ec"></div>
<svg class="a" style="left:456px;top:738px" width="22" height="20" viewBox="0 0 22 20"><path d="M0 2 h8 l2 2 h12 v16 h-22z" fill="#e8b94a"/><rect x="0" y="5" width="22" height="15" fill="#f7d774"/><rect x="0" y="4" width="10" height="2" fill="#fff3c0"/><path d="M6 12 h10 v8 h-3 v-4 h-4 v4 h-3z" fill="#3aa0e0"/></svg>
<svg class="a" style="left:505px;top:737px" width="22" height="22" viewBox="0 0 22 22"><path d="M11 1 C4 1 0.5 6 0.5 11 C0.5 17 5.5 21 11 21 C14 21 16.5 20 18.5 18.5 V14 C16.5 16 14 17 11.5 17 C8 17 6 15 6 12.5 H21 C21.5 5 17 1 11 1Z M6.5 9 C7 6.5 9 5 11.5 5 C14 5 15.5 6.5 15.7 9Z" fill="#1e7ad9" fill-rule="evenodd"/></svg>
<svg class="a" style="left:554px;top:737px" width="22" height="22" viewBox="0 0 22 22"><circle cx="11" cy="11" r="10.5" fill="#db4437"/><path d="M11 11 L20.1 5.75 A10.5 10.5 0 0 1 11 21.5Z" fill="#fcc934"/><path d="M11 11 L11 21.5 A10.5 10.5 0 0 1 1.9 5.75Z" fill="#34a853"/><path d="M11 11 L1.9 5.75 A10.5 10.5 0 0 1 11 0.5 L20.1 5.75Z" fill="#db4437"/><circle cx="11" cy="11" r="5" fill="#fff"/><circle cx="11" cy="11" r="4" fill="#4285f4"/></svg>
<svg class="a" style="left:602px;top:736px" width="23" height="23" viewBox="0 0 23 23"><circle cx="11.5" cy="12" r="10.5" fill="#e66000"/><path d="M11.5 1.5 a10.5 10.5 0 0 1 10.5 10.5 a10.5 10.5 0 0 1 -4 8 C20 15 18 9 13 8 C16 6 17 3 15 1.5Z" fill="#ffcb00"/><circle cx="10.5" cy="13" r="5.5" fill="#3b1d7a"/><path d="M4 10 q3-4 7-2 q-4 1 -3 5 q1 3 5 3 q-6 3 -9-6z" fill="#ff9500"/></svg>
<div class="a" style="left:650px;top:736px;width:25px;height:24px;background:#4b4b4b;border-radius:2px"></div>
<svg class="a" style="left:655px;top:739px" width="15" height="18" viewBox="0 0 15 18"><path d="M13.5 1 L1.5 5 V8.5 L13.5 4.5Z M1.5 8.5 L13.5 12.5 V9 L1.5 5Z M1.5 13.5 L13.5 9.5 V13 L1.5 17Z" fill="#f79a10"/></svg>
<div class="a" style="left:701px;top:737px;width:21px;height:22px;background:#c61e1e;box-shadow:1px 1px 0 #7a0000"></div>
<svg class="a" style="left:703px;top:739px" width="17" height="18" viewBox="0 0 17 18"><path d="M8.5 2 C7 2 7.5 6 10 10 C12 13 15.5 14 15.5 12.5 C15.5 11 10 11 5 13 C1.5 14.5 1 16.5 2 16.5 C3.5 16.5 7 11 8.5 7 C9.5 4 9.5 2 8.5 2Z" fill="none" stroke="#fff" stroke-width="1.3"/></svg>
<svg class="a" style="left:749px;top:736px" width="24" height="24" viewBox="0 0 24 24"><path d="M8 7 V4 a4 4 0 0 1 8 0 V7" fill="none" stroke="#fff" stroke-width="1.5"/><rect x="1" y="7" width="22" height="17" rx="1.5" fill="#fff"/><rect x="7" y="10" width="4.5" height="4.5" fill="#f25022"/><rect x="12.5" y="10" width="4.5" height="4.5" fill="#7fba00"/><rect x="7" y="15.5" width="4.5" height="4.5" fill="#00a4ef"/><rect x="12.5" y="15.5" width="4.5" height="4.5" fill="#ffb900"/></svg>
<svg class="a" style="left:797px;top:736px" width="24" height="24" viewBox="0 0 24 24"><rect x="1" y="3" width="19" height="20" fill="#9bd35a" stroke="#5a8a2a"/><rect x="3" y="5" width="15" height="16" fill="#d6f0b0"/><path d="M6 9v9M6 13h6" stroke="#333" stroke-width="1.3"/><path d="M22 1 L12 17 L11 20 L14 18 L23.5 2.5Z" fill="#f3b43a" stroke="#8a5a10" stroke-width="0.6"/></svg>
<svg class="a" style="left:846px;top:736px" width="24" height="24" viewBox="0 0 24 24"><rect x="10" y="3" width="13" height="18" fill="#fff" stroke="#2b579a"/><path d="M12 6h9M12 9h9M12 12h9M12 15h9M12 18h9" stroke="#2b579a" stroke-width="1"/><path d="M0 3 L13 0.5 V23.5 L0 21Z" fill="#2b579a"/><text x="1.5" y="16" font-family="Liberation Sans" font-weight="bold" font-size="10" fill="#fff">W</text></svg>
<svg class="a" style="left:896px;top:737px" width="24" height="22" viewBox="0 0 24 22"><rect x="1" y="1" width="22" height="20" fill="none" stroke="#fff" stroke-width="1.6"/><path d="M1 21 L9 9 L14 15 L17 11 L23 21Z" fill="#fff"/></svg>
<svg class="a" style="left:945px;top:736px" width="24" height="24" viewBox="0 0 24 24"><path d="M20 5 A10 10 0 1 0 22 12" fill="none" stroke="#fff" stroke-width="2.6"/><circle cx="12" cy="12" r="3.2" fill="none" stroke="#fff" stroke-width="2.6"/><path d="M18 3 l4 2-3 3z" fill="#fff"/></svg>
<svg class="a" style="left:994px;top:736px" width="23" height="24" viewBox="0 0 23 24"><ellipse cx="11.5" cy="12" rx="11" ry="11.5" fill="#d9141e"/><ellipse cx="11.5" cy="12" rx="4.5" ry="8.2" fill="#221d1f"/></svg>
<svg class="a" style="left:1043px;top:737px" width="24" height="22" viewBox="0 0 24 22"><rect x="11" y="3" width="12" height="16" fill="#fff" stroke="#1e7145"/><path d="M11 7h12M11 11h12M11 15h12M17 3v16" stroke="#1e7145" stroke-width="1"/><path d="M0 2.5 L13 0 V22 L0 19.5Z" fill="#1e7145"/><path d="M3 6.5 H5.3 L6.6 9.3 L7.9 6.5 H10.1 L7.8 11 L10.2 15.5 H8 L6.6 12.6 L5.2 15.5 H3 L5.4 11Z" fill="#fff"/></svg>
<svg class="a" style="left:1145px;top:739px" width="18" height="18" viewBox="0 0 18 18"><g fill="none" stroke="#fff" stroke-width="1.2"><circle cx="11.5" cy="4" r="2.8"/><path d="M7 12 q0-4.5 4.5-4.5 q4.5 0 4.5 4.5"/><circle cx="6" cy="9" r="2.8"/><path d="M1 17 q0-4.5 5-4.5 q5 0 5 4.5"/></g></svg>
<svg class="a" style="left:1182px;top:743px" width="14" height="8"><path d="M1 7 L7 1 L13 7" stroke="#fff" stroke-width="1.3" fill="none"/></svg>
<svg class="a" style="left:1204px;top:741px" width="18" height="13" viewBox="0 0 18 13"><path d="M2 0v3M5 0v3M0.5 3h6v2.5a3 3 0 0 1-6 0z M3.5 8.5v4" stroke="#fff" stroke-width="1.1" fill="none"/><rect x="6.5" y="3.5" width="10" height="7" fill="none" stroke="#fff" stroke-width="1.1"/><rect x="7.5" y="4.5" width="7" height="5" fill="#fff"/><rect x="16.5" y="5.5" width="1.5" height="3" fill="#fff"/></svg>
<svg class="a" style="left:1229px;top:736px" width="16" height="20" viewBox="0 0 16 20"><text x="0" y="8" font-size="9" fill="#fff" font-family="Liberation Sans">*</text><g fill="none" stroke="#888" stroke-width="1.1"><path d="M3 18 A12 12 0 0 1 15 6"/><path d="M6 18 A9 9 0 0 1 15 9"/><path d="M9 18 A6 6 0 0 1 15 12"/></g><circle cx="14" cy="17" r="1.3" fill="#888"/></svg>
<div class="t" style="left:1258px;top:733px;font-size:12px;color:#fff">11:39 PM</div>
<div class="t" style="left:1258px;top:750px;font-size:12px;color:#fff">8/3/2018</div>
<svg class="a" style="left:1325px;top:740px" width="17" height="17" viewBox="0 0 17 17"><path d="M0.6 0.6 H16.4 V12.5 H10 L8.5 15.5 L7 12.5 H0.6Z" fill="none" stroke="#fff" stroke-width="1.2"/></svg>
<div class="a" style="left:1362px;top:728px;width:1px;height:40px;background:#777"></div><!--/tb-->
<!-- annot -->
<!-- textbox whitening -->
<!-- tooltip -->
<div class="a" style="left:62px;top:142px;width:220px;height:87px;background:#fff;border:1px solid #c6c6c6"></div>
<div class="t" style="left:77px;top:152.5px;font-size:11.5px;font-weight:bold;color:#555">Sum (Alt+=)</div>
<div class="a" style="left:77px;top:172px;font-size:12px;color:#5a5a5a;line-height:14.9px;white-space:pre">Automatically add a quick
calculation to your worksheet, such
as a sum or average.</div>
<svg class="a" style="left:0;top:0" width="1370" height="768" viewBox="0 0 1370 768">
<g fill="none" stroke="#000" stroke-width="3">
<rect x="57.8" y="48.8" width="70.6" height="85" />
<rect x="290.7" y="19.5" width="97.7" height="30.6" />
<rect x="63" y="142.6" width="217.6" height="85.5" />
</g>
<g fill="none" stroke="#000" stroke-width="3" stroke-linecap="round">
<path d="M372.9 47.0 C373.1 55.0 373.5 79.9 374.2 94.7 C374.9 109.5 375.7 123.4 377.0 135.7 C378.3 148.0 379.5 158.0 381.9 168.5 C384.3 179.0 387.3 189.5 391.4 198.6 C395.5 207.7 400.3 216.8 406.5 223.2 C412.7 229.6 417.2 232.9 428.4 236.9 C439.6 240.9 459.5 244.8 473.6 247.0 C487.7 249.2 501.6 249.8 513.0 250.2 C524.4 250.6 527.6 250.2 542.2 249.2 C556.8 248.2 586.2 245.4 600.6 244.1 C615.0 242.8 623.7 241.9 628.3 241.5"/>
<path d="M85.6 134.5 C86.9 138.8 90.5 150.1 93.4 160.2 C96.3 170.3 99.9 183.6 103.2 195.3 C106.5 207.0 109.8 218.1 113.0 230.5 C116.2 242.9 119.8 256.5 122.7 269.5 C125.6 282.5 128.7 296.2 130.5 308.6 C132.3 321.0 133.3 332.0 133.3 343.8 C133.3 355.5 132.9 365.9 130.5 378.9 C128.1 391.9 120.8 414.7 118.8 421.9"/>
<path d="M256.4 228.6 C256.8 238.1 257.1 268.2 258.7 285.9 C260.3 303.6 262.2 318.8 265.8 334.6 C269.4 350.4 273.6 368.1 280.0 380.5 C286.4 392.9 293.7 401.6 304.5 409.0 C315.3 416.4 330.3 421.3 344.6 424.9 C358.9 428.5 373.8 430.0 390.5 430.6 C407.2 431.2 424.6 430.0 444.9 428.6 C465.2 427.2 501.0 423.1 512.2 422.0"/>
</g>
</svg>
<div class="hw" style="left:651.50px;top:242.8px;font-size:27px;letter-spacing:0.00px;transform:scaleX(1.169);transform-origin:0 0">Step</div>
<div class="hw" style="left:724.25px;top:242.8px;font-size:27px;letter-spacing:0.00px;transform:scaleX(1.570);transform-origin:0 0">1</div>
<div class="hw" style="left:755.00px;top:242.8px;font-size:27px;letter-spacing:0.00px;transform:scaleX(2.082);transform-origin:0 0">-</div>
<div class="hw" style="left:652.50px;top:284.1px;font-size:28.5px;letter-spacing:0.00px;transform:scaleX(1.190);transform-origin:0 0">Formula</div>
<div class="hw" style="left:529.00px;top:414.6px;font-size:26.5px;letter-spacing:0.00px;transform:scaleX(1.298);transform-origin:0 0">Defination</div>
<div class="hw" style="left:690.00px;top:414.6px;font-size:26.5px;letter-spacing:0.00px;transform:scaleX(1.156);transform-origin:0 0">(used</div>
<div class="hw" style="left:777.00px;top:414.6px;font-size:26.5px;letter-spacing:0.00px;transform:scaleX(1.252);transform-origin:0 0">for</div>
<div class="hw" style="left:827.50px;top:414.6px;font-size:26.5px;letter-spacing:0.00px;transform:scaleX(1.363);transform-origin:0 0">quick</div>
<div class="hw" style="left:918.00px;top:414.6px;font-size:26.5px;letter-spacing:0.00px;transform:scaleX(1.329);transform-origin:0 0">calculation)</div>
<div class="hw" style="left:64.00px;top:454.5px;font-size:27.5px;letter-spacing:0.00px;transform:scaleX(1.147);transform-origin:0 0">Step</div>
<div class="hw" style="left:136.00px;top:454.5px;font-size:27.5px;letter-spacing:0.00px;transform:scaleX(1.448);transform-origin:0 0">2</div>
<div class="hw" style="left:169.50px;top:454.5px;font-size:27.5px;letter-spacing:0.00px;transform:scaleX(1.234);transform-origin:0 0">-Autosum</div>
<div class="hw" style="left:63.00px;top:496.2px;font-size:26.5px;letter-spacing:0.00px;transform:scaleX(1.376);transform-origin:0 0">(click</div>
<div class="hw" style="left:155.00px;top:496.2px;font-size:26.5px;letter-spacing:0.00px;transform:scaleX(1.078);transform-origin:0 0">on</div>
<div class="hw" style="left:200.00px;top:496.2px;font-size:26.5px;letter-spacing:0.00px;transform:scaleX(1.262);transform-origin:0 0">dropdown</div>
<div class="hw" style="left:357.00px;top:496.2px;font-size:26.5px;letter-spacing:0.00px;transform:scaleX(1.213);transform-origin:0 0">menu</div>
<div class="hw" style="left:445.00px;top:496.2px;font-size:26.5px;letter-spacing:0.00px;transform:scaleX(1.269);transform-origin:0 0">for</div>
<div class="hw" style="left:496.50px;top:496.2px;font-size:26.5px;letter-spacing:0.00px;transform:scaleX(1.194);transform-origin:0 0">more)</div>
<!--/annot-->
</body></html>
